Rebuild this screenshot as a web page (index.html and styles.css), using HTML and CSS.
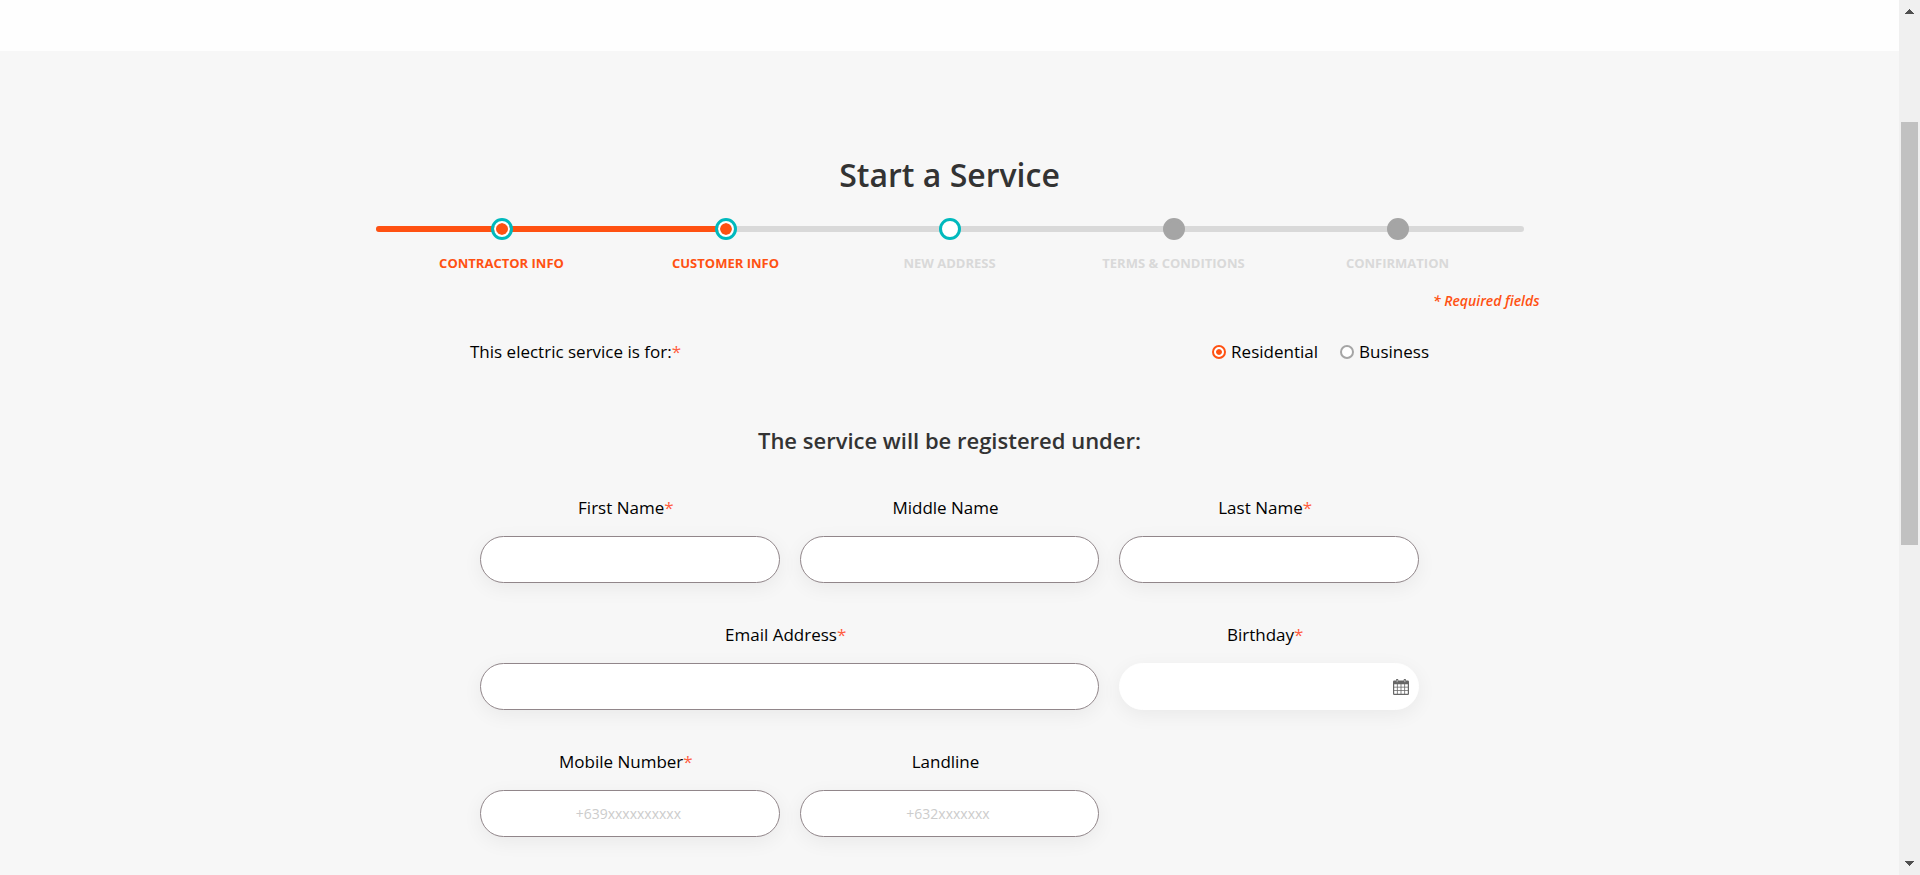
FILE: index.html
```html
<!DOCTYPE html>
<html lang="en">
<head>
<meta charset="utf-8">
<title>Start a Service</title>
<link rel="stylesheet" href="styles.css">
</head>
<body>
<div class="viewport">
  <div class="page">
    <header class="site-header"></header>
    <main class="content">
      <h1 class="title">Start a Service</h1>
      <div class="progress">
        <div class="track"><div class="track-fill"></div></div>
        <ol class="steps">
          <li class="step done"><span class="dot"></span><span class="step-label">CONTRACTOR INFO</span></li>
          <li class="step done"><span class="dot"></span><span class="step-label">CUSTOMER INFO</span></li>
          <li class="step next"><span class="dot"></span><span class="step-label">NEW ADDRESS</span></li>
          <li class="step"><span class="dot"></span><span class="step-label">TERMS &amp; CONDITIONS</span></li>
          <li class="step"><span class="dot"></span><span class="step-label">CONFIRMATION</span></li>
        </ol>
      </div>
      <p class="required-note">* Required fields</p>
      <form class="form">
        <div class="service-type" role="radiogroup" aria-labelledby="service-for">
          <span id="service-for">This electric service is for:<span class="star">*</span></span>
          <div class="options">
            <label class="option"><input class="radio" type="radio" name="service" checked>Residential</label>
            <label class="option"><input class="radio" type="radio" name="service">Business</label>
          </div>
        </div>
        <h2 class="section-title">The service will be registered under:</h2>
        <div class="fields">
          <div class="field">
            <label class="field-label" for="first">First Name<span class="star">*</span></label>
            <input class="input" id="first" type="text">
          </div>
          <div class="field">
            <label class="field-label" for="middle">Middle Name</label>
            <input class="input" id="middle" type="text">
          </div>
          <div class="field">
            <label class="field-label" for="last">Last Name<span class="star">*</span></label>
            <input class="input" id="last" type="text">
          </div>
          <div class="field wide">
            <label class="field-label" for="email">Email Address<span class="star">*</span></label>
            <input class="input" id="email" type="email">
          </div>
          <div class="field">
            <label class="field-label" for="birthday">Birthday<span class="star">*</span></label>
            <div class="date">
              <input class="input plain" id="birthday" type="text">
              <svg class="calendar" viewBox="0 0 16 16" aria-hidden="true">
                <path fill="#666" fill-rule="evenodd" d="M1.3 1.5H3V.8Q3 0 3.8 0h.7Q5.300 0 5.300.8v.7h5.400V.8Q10.700 0 11.500 0h.7Q13 0 13 .8v.7h1.700Q16 1.500 16 2.800v11.900Q16 16 14.700 16H1.300Q0 16 0 14.700V2.800Q0 1.500 1.300 1.500ZM1.200 5.200v2.500h2.700V5.200ZM4.700 5.200v2.500h2.900V5.200ZM8.400 5.200v2.500h2.900V5.200ZM12.100 5.200v2.500h2.700V5.200ZM1.200 8.500v2.700h2.700V8.500ZM4.700 8.500v2.700h2.900V8.500ZM8.400 8.500v2.700h2.900V8.500ZM12.100 8.500v2.700h2.700V8.500ZM1.200 12v2.800h2.700V12ZM4.700 12v2.800h2.900V12ZM8.400 12v2.800h2.900V12ZM12.100 12v2.800h2.700V12Z"/>
                <path stroke="#fff" stroke-width=".6" d="M4.150 1v2.200M11.850 1v2.200"/>
              </svg>
            </div>
          </div>
          <div class="field">
            <label class="field-label" for="mobile">Mobile Number<span class="star">*</span></label>
            <input class="input" id="mobile" type="tel" placeholder="+639xxxxxxxxxx">
          </div>
          <div class="field">
            <label class="field-label" for="landline">Landline</label>
            <input class="input" id="landline" type="tel" placeholder="+632xxxxxxx">
          </div>
        </div>
      </form>
    </main>
  </div>
  <div class="scrollbar" aria-hidden="true">
    <svg class="arrow" viewBox="0 0 9 5"><path fill="#505050" d="M4 0h1v1h1v1h1v1h1v1h1v1H0V4h1V3h1V2h1V1h1Z"/></svg>
    <div class="rail"><div class="thumb"></div></div>
    <svg class="arrow" viewBox="0 0 9 5"><path fill="#505050" d="M4 5h1V4h1V3h1V2h1V1h1V0H0v1h1v1h1v1h1v1h1Z"/></svg>
  </div>
</div>
</body>
</html>
```

FILE: styles.css
```css
* {
  box-sizing: border-box;
}

body {
  margin: 0;
  font-family: "Open Sans", sans-serif;
  font-size: 17px;
  line-height: 24px;
  color: #000;
  background: #f7f7f7;
}

.viewport {
  display: grid;
  grid-template-columns: 1fr 21px;
  height: 100vh;
  overflow: hidden;
}

.page {
  overflow: hidden;
}

.site-header {
  height: 51px;
  background: #fefefe;
}

.content {
  max-width: 1180px;
  margin: 0 auto;
  padding: 102px 0 40px;
}

.title {
  margin: 0 0 21px;
  font-size: 32px;
  line-height: 44px;
  font-weight: 600;
  text-align: center;
  color: #333;
}

.progress {
  display: grid;
  padding: 0 16px;
}

.track,
.steps {
  grid-area: 1 / 1;
}

.track {
  height: 6px;
  margin-top: 8px;
  border-radius: 3px;
  background: #d9d9d9;
}

.track-fill {
  width: 30%;
  height: 100%;
  border-radius: 3px;
  background: #ff5112;
}

.steps {
  display: grid;
  grid-template-columns: repeat(5, 1fr);
  z-index: 1;
  margin: 0;
  padding: 0 14px;
  list-style: none;
}

.step {
  display: flex;
  flex-direction: column;
  align-items: center;
  gap: 13px;
  font-size: 13px;
  line-height: 20px;
  font-weight: 700;
  color: #d9d9d9;
}

.dot {
  width: 22px;
  height: 22px;
  border: 3px solid #a5a5a5;
  border-radius: 50%;
  background: #a5a5a5;
}

.done {
  color: #ff5112;
}

.next .dot {
  border-color: #00b9bd;
  background: #fff;
}

.done .dot {
  padding: 2px;
  border-color: #00b9bd;
  background: #ff5112 content-box;
  box-shadow: inset 0 0 0 2px #fff;
}

.required-note {
  margin: 18px 0 0;
  font-size: 14px;
  line-height: 20px;
  font-style: italic;
  font-weight: 600;
  text-align: right;
  color: #ff5112;
}

.form {
  max-width: 959px;
  margin: 29px auto 0;
}

.service-type {
  display: flex;
  justify-content: space-between;
}

.star {
  color: #ff5d40;
}

.options {
  display: flex;
  gap: 22px;
}

.option {
  display: flex;
  align-items: center;
  gap: 5px;
}

.radio {
  appearance: none;
  width: 14px;
  height: 14px;
  margin: 0;
  border: 2px solid #a5a5a5;
  border-radius: 50%;
  background: #fff;
}

.radio:checked {
  padding: 2px;
  border-color: #ff5112;
  background: #ff5112 content-box;
  box-shadow: inset 0 0 0 2px #fff;
}

.section-title {
  margin: 60px 0 40px;
  font-size: 22px;
  line-height: 32px;
  font-weight: 600;
  text-align: center;
  color: #333;
}

.fields {
  display: grid;
  grid-template-columns: repeat(3, 1fr);
  gap: 40px 20px;
  padding: 0 10px;
}

.field {
  display: flex;
  flex-direction: column;
  gap: 16px;
  text-align: center;
}

.field-label {
  padding-right: 8px;
}

.wide {
  grid-column: span 2;
}

.input {
  width: 100%;
  height: 47px;
  padding: 0 23px 0 20px;
  border: 1px solid #91868a;
  border-radius: 24px;
  background: #fff;
  box-shadow: 0 5px 20px rgba(0, 0, 0, 0.06);
  font: 14px/20px "Open Sans", sans-serif;
  text-align: center;
}

.input::placeholder {
  color: #ccc;
}

.plain {
  border-color: #fff;
}

.date {
  position: relative;
}

.calendar {
  position: absolute;
  top: 16px;
  right: 10px;
  width: 16px;
  height: 16px;
}

.scrollbar {
  display: flex;
  flex-direction: column;
  align-items: center;
  padding: 9px 0;
  background: #f0f0f0;
}

.arrow {
  width: 9px;
  height: 5px;
}

.rail {
  flex: 1;
  display: flex;
  width: 17px;
  padding: 108px 0 316px;
}

.thumb {
  flex: 1;
  background: #c1c1c1;
}
```
